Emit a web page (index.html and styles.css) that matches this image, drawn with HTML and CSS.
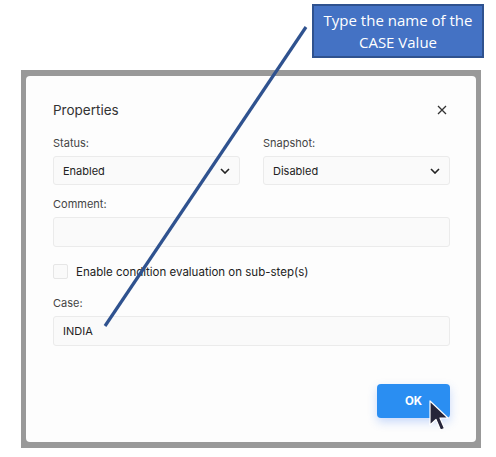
FILE: index.html
```html
<!DOCTYPE html>
<html lang="en">
<head>
    <meta charset="UTF-8">
    <title>Properties</title>
    <link rel="stylesheet" href="styles.css">
</head>
<body>

    <div class="frame">
        <div class="dialog">
            <div class="dialog-header">
                <h1 class="title">Properties</h1>
                <svg class="close" width="10" height="10" viewBox="0 0 10 10"><path d="M1 1 L9 9 M9 1 L1 9" stroke="#333" stroke-width="1.3"/></svg>
            </div>

            <div class="row">
                <div class="field">
                    <label>Status:</label>
                    <div class="select">
                        <span>Enabled</span>
                        <svg class="chevron" width="10" height="6" viewBox="0 0 10 6"><path d="M1 1 L5 5 L9 1" fill="none" stroke="#222" stroke-width="1.6"/></svg>
                    </div>
                </div>
                <div class="field">
                    <label>Snapshot:</label>
                    <div class="select">
                        <span>Disabled</span>
                        <svg class="chevron" width="10" height="6" viewBox="0 0 10 6"><path d="M1 1 L5 5 L9 1" fill="none" stroke="#222" stroke-width="1.6"/></svg>
                    </div>
                </div>
            </div>

            <div class="field">
                <label>Comment:</label>
                <div class="input"></div>
            </div>

            <div class="check-row">
                <span class="checkbox"></span>
                <span>Enable condition evaluation on sub-step(s)</span>
            </div>

            <div class="field">
                <label>Case:</label>
                <div class="input">INDIA</div>
            </div>

            <div class="footer">
                <button class="ok">OK</button>
            </div>
        </div>
    </div>

    <!-- callout drawn over the screenshot -->
    <svg class="pointer-line" width="496" height="457">
        <line x1="306" y1="27" x2="105" y2="326" stroke="#2f528f" stroke-width="3.2"/>
    </svg>

    <div class="callout">Type the name of the<br>CASE Value</div>

    <svg class="cursor" width="22" height="32" viewBox="0 0 22 32">
        <path d="M1 1 L1 25 L7 19.5 L11.5 30 L15.5 28.5 L11 18 L19 18 Z" fill="#26253a" stroke="#fff" stroke-width="1.2" stroke-linejoin="round"/>
    </svg>

</body>
</html>
```

FILE: styles.css
```css
* {
    margin: 0;
    padding: 0;
    box-sizing: border-box;
}

body {
    font-family: Inter, "Noto Sans", sans-serif;
    background-color: #fff;
    color: #333;
    width: 496px;
    height: 457px;
    position: relative;
    overflow: hidden;
}

.frame {
    margin: 70px 0 0 21px;
    width: 460px;
    height: 378px;
    background-color: #999;
    padding: 6px 5px 6px 5px;
}

.dialog {
    background-color: #fdfdfd;
    border-radius: 4px;
    height: 100%;
    padding: 24px 26px 0 27px;
    display: flex;
    flex-direction: column;
}

.dialog-header {
    display: flex;
    justify-content: space-between;
    align-items: center;
    height: 20px;
    margin-bottom: 16px;
}

.title {
    font-size: 13.5px;
    font-weight: 400;
    color: #333;
}

.close {
    margin-right: 3px;
}

.row {
    display: flex;
    gap: 23px;
}

.row .field {
    flex: 1;
}

.field {
    margin-bottom: 12px;
}

label {
    display: block;
    font-size: 11px;
    line-height: 14px;
    margin-bottom: 6px;
    color: #444;
}

.select,
.input {
    height: 29px;
    background-color: #fafafa;
    border: 1px solid #ebebeb;
    border-radius: 3px;
    font-size: 11px;
    color: #222;
    padding: 0 9px;
    display: flex;
    align-items: center;
    justify-content: space-between;
}

.input {
    height: 30px;
}

.check-row {
    display: flex;
    align-items: center;
    gap: 8px;
    font-size: 11.5px;
    color: #222;
    margin-top: 5px;
    margin-bottom: 17px;
}

.checkbox {
    width: 15px;
    height: 15px;
    border: 1px solid #e6e6e6;
    border-radius: 2px;
    background-color: #fafafa;
}

.footer {
    display: flex;
    justify-content: flex-end;
    margin-top: 26px;
}

.ok {
    width: 73px;
    height: 34px;
    background-color: #2a8ef2;
    color: #fff;
    font-family: Inter, sans-serif;
    font-weight: 700;
    font-size: 11.5px;
    border: none;
    border-radius: 4px;
    box-shadow: 0 4px 10px rgba(42, 110, 242, 0.25);
}

.pointer-line {
    position: absolute;
    left: 0;
    top: 0;
}

.callout {
    position: absolute;
    left: 312px;
    top: 4px;
    width: 172px;
    height: 54px;
    background-color: #4472c4;
    border: 2px solid #2f528f;
    color: #fff;
    font-family: "Open Sans", sans-serif;
    font-size: 15px;
    line-height: 22px;
    text-align: center;
    padding-top: 3px;
}

.cursor {
    position: absolute;
    left: 429px;
    top: 400px;
}
```
